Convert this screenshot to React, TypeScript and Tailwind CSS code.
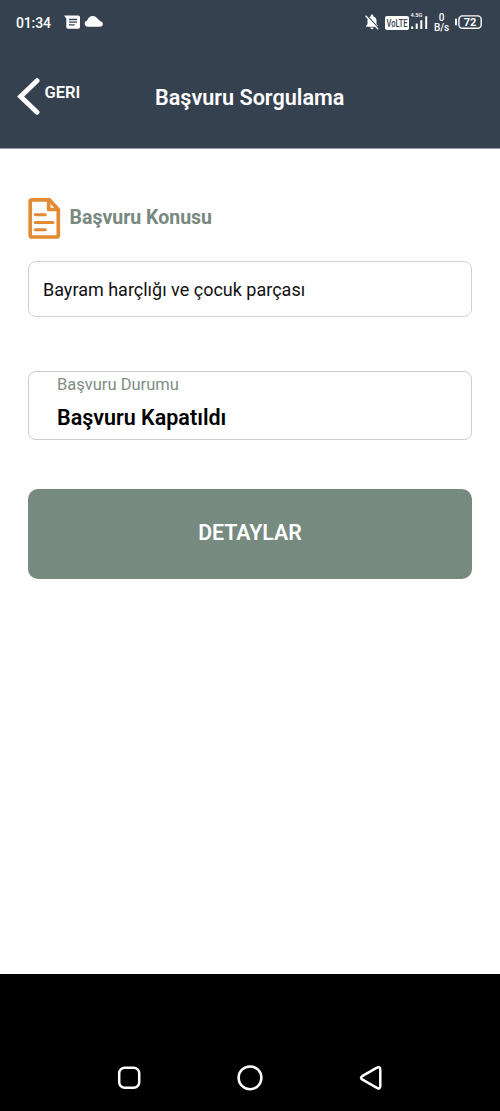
import React from 'react';

function StatusBar() {
  return (
    <div className="flex h-[46px] items-start text-white">
      <span className="ml-4 mt-[13px] w-[48px] whitespace-nowrap text-[14px] leading-5 font-medium tracking-[-0.15px]">01:34</span>
      <svg className="-ml-[0.5px] mt-[15px] h-[15px] w-[17px]" viewBox="0 0 17 15" fill="none">
        <path d="M0 .5h14.300a1.700 1.700 0 0 1 1.700 1.700v9.800a1.700 1.700 0 0 1-1.700 1.700H4a1.700 1.700 0 0 1-1.700-1.700V3.600z" fill="#fff" />
        <path d="M5 4.500h8M5 7.200h8M5 9.900h5.700" stroke="#36414f" strokeWidth="1.300" />
      </svg>
      <svg className="ml-[3.500px] mt-[15px] h-3 w-[19px]" viewBox="0 0 18 12" preserveAspectRatio="none">
        <path d="M3.600 11.800a3.200 3.200 0 0 1-.5-6.300C3.600 3 5.800 1.100 8.400 1.100c2.100 0 4 1.300 4.700 3.200.9.100 1.500.7 1.900 1.600 1.700.3 2.900 1.500 2.900 3.100 0 1.700-1.200 2.800-2.900 2.800z" fill="#fff" />
      </svg>
      <svg className="ml-[262px] mt-[14px] h-[17px] w-[14px]" viewBox="0 0 14 17" fill="none">
        <path d="M1.200 12.800v-1.200l1.300-1.300V6.500C2.500 4.500 3.800 2.900 5.700 2.500V1.800a1.300 1.300 0 0 1 2.600 0v.7c1.900.4 3.200 2 3.200 4v3.800l1.300 1.300v1.200zM5.400 13.600h3.200a1.600 1.600 0 0 1-3.200 0z" fill="#fff" />
        <path d="M1.600 1.200l12 13" stroke="#36414f" strokeWidth="1.200" />
        <path d="M.5 1.800l12.700 13.500" stroke="#fff" strokeWidth="1.300" />
      </svg>
      <svg className="ml-[6px] mt-[15px] h-4 w-6" viewBox="0 0 24 16">
        <rect y="1" width="24" height="14" rx="2" fill="#fff" />
        <text x="1.500" y="12" textLength="21" lengthAdjust="spacingAndGlyphs" fontSize="11" fontFamily="Roboto, sans-serif" fontWeight="500" fill="#36414f">VoLTE</text>
      </svg>
      <svg className="mt-[10px] h-5 w-5" viewBox="0 0 20 20">
        <text x="1.500" y="7.300" textLength="12" lengthAdjust="spacingAndGlyphs" fontSize="6" fontFamily="Roboto, sans-serif" fontWeight="500" fill="#fff">4.5G</text>
        <path d="M3.200 16.500v2.500M7.700 13.400v5.600M12.300 10.200v8.800M17.200 6.200V19" stroke="#fff" strokeWidth="2" />
      </svg>
      <div className="ml-[3px] mt-[13px] w-[19px] text-center text-[10px] leading-[9.500px] font-medium tracking-[-0.1px]">
        <div>0</div>
        <div>B/s</div>
      </div>
      <svg className="ml-[3px] mt-[15px] h-[15px] w-[28px]" viewBox="0 0 28 15" fill="none">
        <path d="M2 4.500v5" stroke="#fff" strokeWidth="1.900" strokeLinecap="round" />
        <rect x="4.900" y=".9" width="22.300" height="12.300" rx="3.500" stroke="#fff" strokeWidth="1.400" />
        <text x="16.100" y="11" textAnchor="middle" fontSize="11" fontFamily="Roboto, sans-serif" fontWeight="700" fill="#fff">72</text>
      </svg>
    </div>
  );
}

function Header() {
  return (
    <header className="h-[149px] border-b border-[#9aa0a7] bg-[#36414f] text-white">
      <StatusBar />
      <div className="flex items-start">
        <svg className="ml-[17px] mt-8 h-[38px] w-[23px]" viewBox="0 0 23 38" fill="none">
          <path d="M20 2.700L3.600 18.500L20 34.200" stroke="#fff" strokeWidth="4.900" strokeLinecap="round" />
        </svg>
        <span className="ml-[4.500px] mt-[37px] w-[110.500px] text-[16.500px] leading-5 font-semibold">GERI</span>
        <h1 className="mt-[40px] whitespace-nowrap text-[21.600px] leading-6 font-semibold">Başvuru Sorgulama</h1>
      </div>
    </header>
  );
}

function NavigationBar() {
  return (
    <nav className="flex h-[137px] items-end justify-between bg-black px-[116px] pb-[19px]">
      <svg className="h-7 w-7" viewBox="0 0 28 28" fill="none" stroke="#fff" strokeWidth="2.500">
        <rect x="3.200" y="3.800" width="20" height="20" rx="5.500" />
      </svg>
      <svg className="h-7 w-7" viewBox="0 0 28 28" fill="none" stroke="#fff" strokeWidth="2.500">
        <circle cx="14" cy="13.800" r="11.400" />
      </svg>
      <svg className="h-7 w-7" viewBox="0 0 28 28" fill="none" stroke="#fff" strokeWidth="2.500">
        <path d="M6.200 12.200L20.500 3.900Q24.300 1.900 24.300 5.900V21.800Q24.300 25.800 20.500 23.700L6.200 15.400Q3.800 13.800 6.200 12.200Z" />
      </svg>
    </nav>
  );
}

export default function App() {
  return (
    <div className="flex h-[1111px] w-[500px] flex-col overflow-hidden bg-[#fefefe] font-['Roboto',sans-serif]">
      <Header />
      <main className="flex flex-1 flex-col px-7 pt-[49px]">
        <div className="flex h-[41px]">
          <svg className="h-[41px] w-[33px]" viewBox="0 0 33 41" fill="none" stroke="#e28b34" strokeWidth="3.700" strokeLinejoin="round" strokeLinecap="round">
            <path d="M4.200 1.900H21.500L30.300 11.500V37.200Q30.300 39 28.500 39H4Q2.200 39 2.200 37.200V3.700Q2.200 1.900 4.200 1.900Z" />
            <path d="M20.700 2.500V11.500H30" />
            <path d="M7.300 16.800H17.300M7.300 24.400H25M7.300 31.800H17.300" strokeWidth="3" />
          </svg>
          <h2 className="ml-[8.500px] mt-[8px] whitespace-nowrap text-[19.500px] leading-6 font-bold text-[#788980]">Başvuru Konusu</h2>
        </div>
        <div className="mt-[22px] flex h-[56px] items-center rounded-[8px] border border-[#cfd2d1] px-[14px] text-[18px] text-[#111]">
          Bayram harçlığı ve çocuk parçası
        </div>
        <div className="mt-[54px] h-[69px] rounded-[8px] border border-[#c9cecc] px-7 pt-[2px]">
          <div className="text-[16.500px] leading-[22px] text-[#808d86]">Başvuru Durumu</div>
          <div className="mt-[9px] text-[21.500px] leading-[26px] font-semibold text-black">Başvuru Kapatıldı</div>
        </div>
        <button className="mt-[49px] h-[90px] rounded-[10px] bg-[#778a7f] pb-[3px] text-[21.300px] font-semibold text-white">
          DETAYLAR
        </button>
      </main>
      <NavigationBar />
    </div>
  );
}
